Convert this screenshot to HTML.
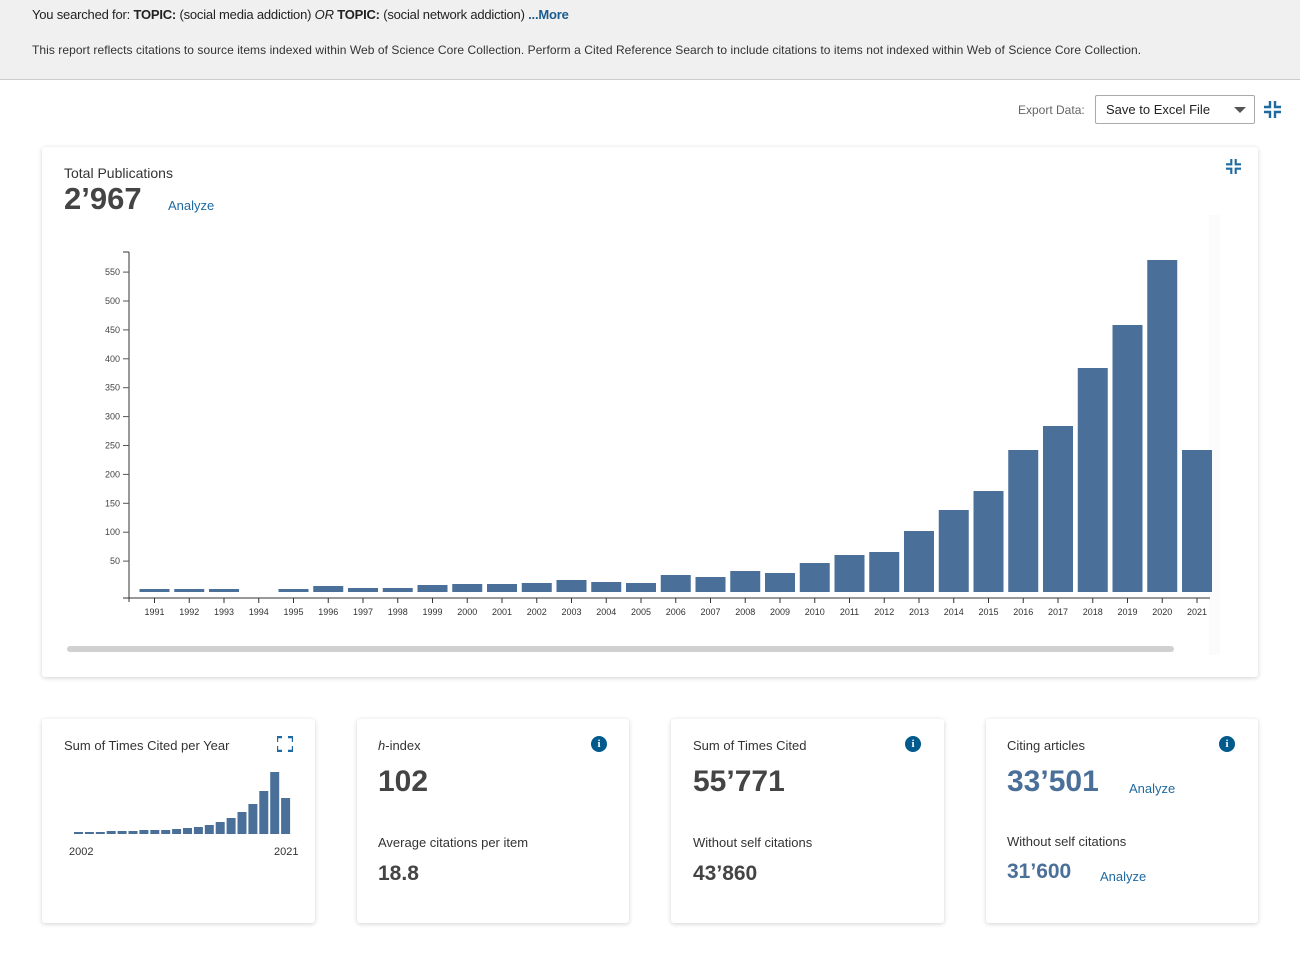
<!DOCTYPE html>
<html><head><meta charset="utf-8">
<style>
body{margin:0;width:1300px;height:962px;background:#fff;font-family:"Liberation Sans",sans-serif;color:#333;position:relative;overflow:hidden}
.top{position:absolute;left:0;top:0;width:1300px;height:79px;background:#f0f0f0;border-bottom:1px solid #ccc}
.abs{position:absolute;white-space:nowrap}
.card{position:absolute;background:#fff;box-shadow:0 1px 5px rgba(0,0,0,.18);border-radius:3px}
.lbl{font-size:13px;color:#333}
.big{font-size:30px;color:#444;font-weight:bold}
.link{color:#1f6aa0;font-size:13px}
.info{position:absolute;width:16px;height:16px;border-radius:50%;background:#005a8c;color:#fff;font:bold 11px "Liberation Serif",serif;text-align:center;line-height:16px}
</style></head><body>
<div class="top">
<div class="abs" style="left:32px;top:7px;font-size:13px;color:#222;letter-spacing:-0.2px">You searched for: <b>TOPIC:</b> (social media addiction) <i>OR</i> <b>TOPIC:</b> (social network addiction) <b style="color:#1a5c8f">...More</b></div>
<div class="abs" style="left:32px;top:43px;font-size:12px;color:#333;letter-spacing:0.06px">This report reflects citations to source items indexed within Web of Science Core Collection. Perform a Cited Reference Search to include citations to items not indexed within Web of Science Core Collection.</div>
</div>
<div class="abs" style="left:1018px;top:103px;font-size:12px;color:#666">Export Data:</div>
<div class="abs" style="left:1095px;top:95px;width:160px;height:29px;border:1px solid #aaa;border-radius:2px;box-sizing:border-box;font-size:13px;line-height:27px;padding-left:10px;color:#222">Save to Excel File<span style="position:absolute;right:8px;top:11px;border-left:6px solid transparent;border-right:6px solid transparent;border-top:6px solid #555"></span></div>
<svg class="abs" style="left:1264px;top:101px" width="17" height="17" viewBox="0 0 17 17" fill="none" stroke="#1f6aa0" stroke-width="2.4"><path d="M6 0v6H0M11 0v6h6M6 17v-6H0M11 17v-6h6"/></svg>

<div class="card" style="left:42px;top:147px;width:1216px;height:530px">
<div class="abs" style="left:22px;top:18px;font-size:14px;color:#333">Total Publications</div>
<div class="abs" style="left:22px;top:34px;font-size:31px;color:#444;font-weight:bold">2’967</div>
<div class="abs link" style="left:126px;top:51px">Analyze</div>
<svg class="abs" style="left:1184px;top:12px" width="15" height="15" viewBox="0 0 17 17" fill="none" stroke="#1f6aa0" stroke-width="2.4"><path d="M6 0v6H0M11 0v6h6M6 17v-6H0M11 17v-6h6"/></svg>
</div>
<svg id="ch" class="abs" style="left:0;top:0" width="1300" height="680"></svg>

<div class="card" style="left:42px;top:719px;width:273px;height:204px">
<div class="abs" style="left:22px;top:19px;font-size:13px">Sum of Times Cited per Year</div>
<svg class="abs" style="left:235px;top:17px" width="16" height="16" viewBox="0 0 16 16" fill="none" stroke="#1f6aa0" stroke-width="2.4"><path d="M0 6V1h5M11 1h5v5M0 10v5h5M11 15h5v-5"/></svg>
<div class="abs" style="left:27px;top:127px;font-size:11px">2002</div>
<div class="abs" style="left:232px;top:127px;font-size:11px">2021</div>
</div>
<svg id="mini" class="abs" style="left:0;top:0" width="320" height="850"></svg>

<div class="card" style="left:357px;top:719px;width:272px;height:204px">
<div class="abs lbl" style="left:21px;top:19px"><i>h</i>-index</div>
<div class="info" style="left:234px;top:17px">i</div>
<div class="abs big" style="left:21px;top:46px">102</div>
<div class="abs lbl" style="left:21px;top:116px">Average citations per item</div>
<div class="abs" style="left:21px;top:143px;font-size:21px;color:#444;font-weight:bold">18.8</div>
</div>
<div class="card" style="left:671px;top:719px;width:273px;height:204px">
<div class="abs lbl" style="left:22px;top:19px">Sum of Times Cited</div>
<div class="info" style="left:234px;top:17px">i</div>
<div class="abs big" style="left:22px;top:46px">55’771</div>
<div class="abs lbl" style="left:22px;top:116px">Without self citations</div>
<div class="abs" style="left:22px;top:143px;font-size:21px;color:#444;font-weight:bold">43’860</div>
</div>
<div class="card" style="left:986px;top:719px;width:272px;height:204px">
<div class="abs lbl" style="left:21px;top:19px">Citing articles</div>
<div class="info" style="left:233px;top:17px">i</div>
<div class="abs big" style="left:21px;top:46px;color:#4a7099">33’501</div>
<div class="abs link" style="left:143px;top:62px">Analyze</div>
<div class="abs lbl" style="left:21px;top:115px">Without self citations</div>
<div class="abs" style="left:21px;top:141px;font-size:21px;color:#4a7099;font-weight:bold">31’600</div>
<div class="abs link" style="left:114px;top:150px">Analyze</div>
</div>
<script>
var s=document.getElementById("ch"),h="";
h+='<rect x="1209" y="215" width="11" height="440" fill="#fbfbfb"/>';
h+='<line x1="129" y1="252" x2="129" y2="602" stroke="#333"/><line x1="123" y1="598" x2="1210" y2="598" stroke="#333"/>';
h+='<line x1="123" y1="252" x2="129" y2="252" stroke="#333"/>';
for(var v=50;v<=550;v+=50){var y=590-(v*0.578);h+='<line x1="123" y1="'+y+'" x2="129" y2="'+y+'" stroke="#555"/><text x="120" y="'+(y+3)+'" font-size="9" fill="#444" text-anchor="end">'+v+'</text>';}
var t=[589,589,589,592,589,586,588,588,585,584,584,583,580,582,583,575,577,571,573,563,555,552,531,510,491,450,426,368,325,260,450];
for(var i=0;i<31;i++){var cx=154.5+i*34.75;if(t[i]<592)h+='<rect x="'+(cx-15)+'" y="'+t[i]+'" width="30" height="'+(592-t[i])+'" fill="#4a7099"/>';
h+='<line x1="'+cx+'" y1="598" x2="'+cx+'" y2="603" stroke="#333"/><text x="'+cx+'" y="615" font-size="9" fill="#333" text-anchor="middle">'+(1991+i)+'</text>';}
h+='<rect x="67" y="646" width="1107" height="6" rx="3" fill="#d0d0d0"/>';
s.innerHTML=h;
var m=document.getElementById("mini"),g="";
var mt=[832,832,832,831,831,831,830,830,830,829,828,827,825,822,818,812,804,791,772,798];
for(var j=0;j<20;j++){var x=74+j*10.9;g+='<rect x="'+x+'" y="'+mt[j]+'" width="9" height="'+(834-mt[j])+'" fill="#4a7099"/>';}
m.innerHTML=g;
</script>
</body></html>
